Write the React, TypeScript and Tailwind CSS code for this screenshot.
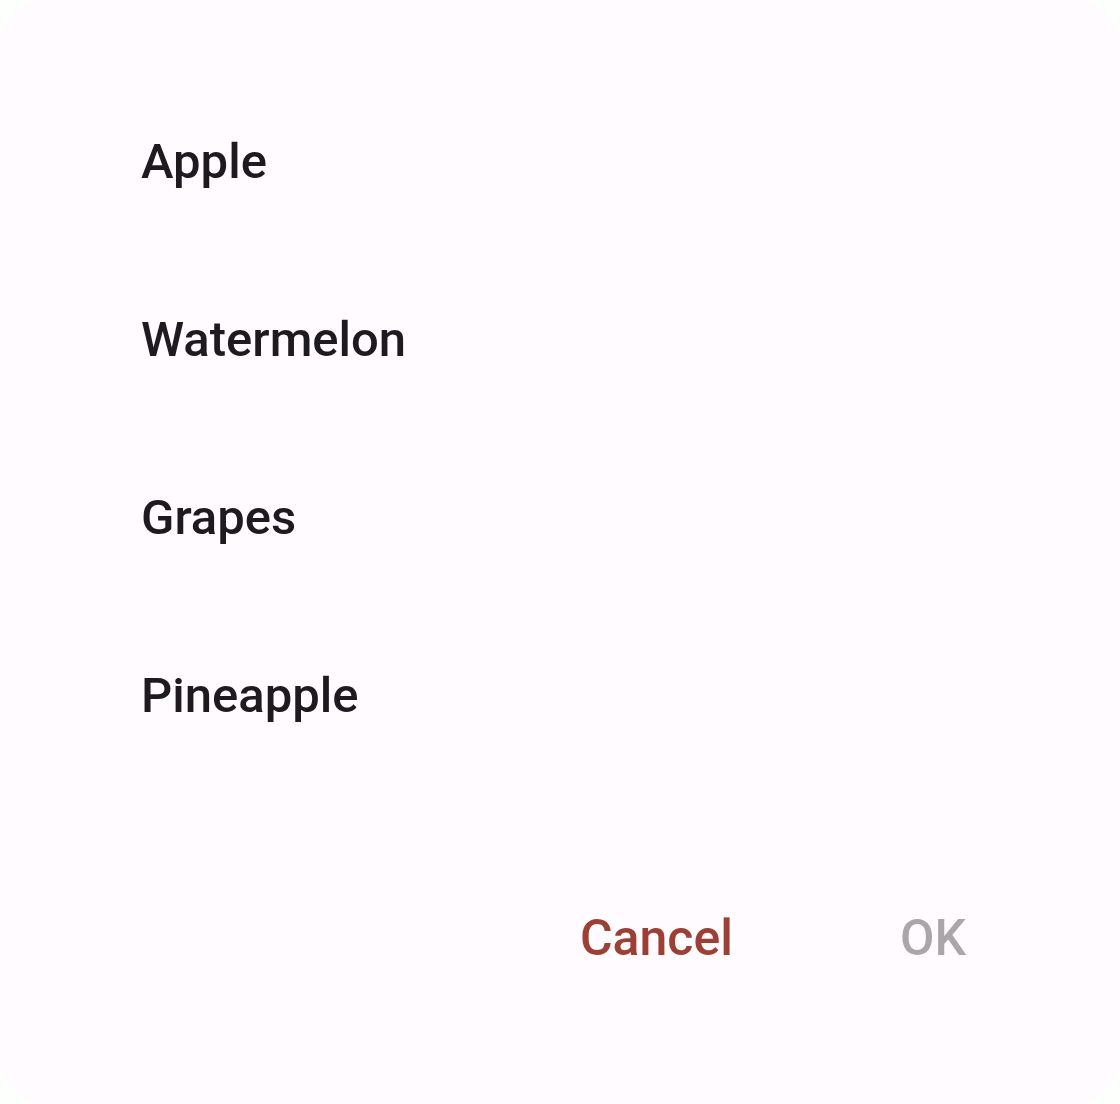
export default function App() {
  const fruits = ["Apple", "Watermelon", "Grapes", "Pineapple"];
  return (
    <div
      className="w-[1120px] h-[1104px] bg-[#fdfffd]"
      style={{ fontFamily: "Roboto, 'Noto Sans', sans-serif" }}
    >
      <div className="w-full h-full rounded-[44px] bg-[#fffbfe] flex flex-col pt-[73px]">
        <ul className="flex flex-col">
          {fruits.map((f) => (
            <li
              key={f}
              className="h-[178px] flex items-center pl-[141px] text-[49px] font-medium text-[#1d1b20]"
            >
              {f}
            </li>
          ))}
        </ul>
        <div className="flex justify-end items-center pr-[154px] mt-[116px] gap-[167px] text-[50px] font-medium">
          <button className="text-[#9c4035]">Cancel</button>
          <button className="text-[#aaa6a9]" disabled>
            OK
          </button>
        </div>
      </div>
    </div>
  );
}
